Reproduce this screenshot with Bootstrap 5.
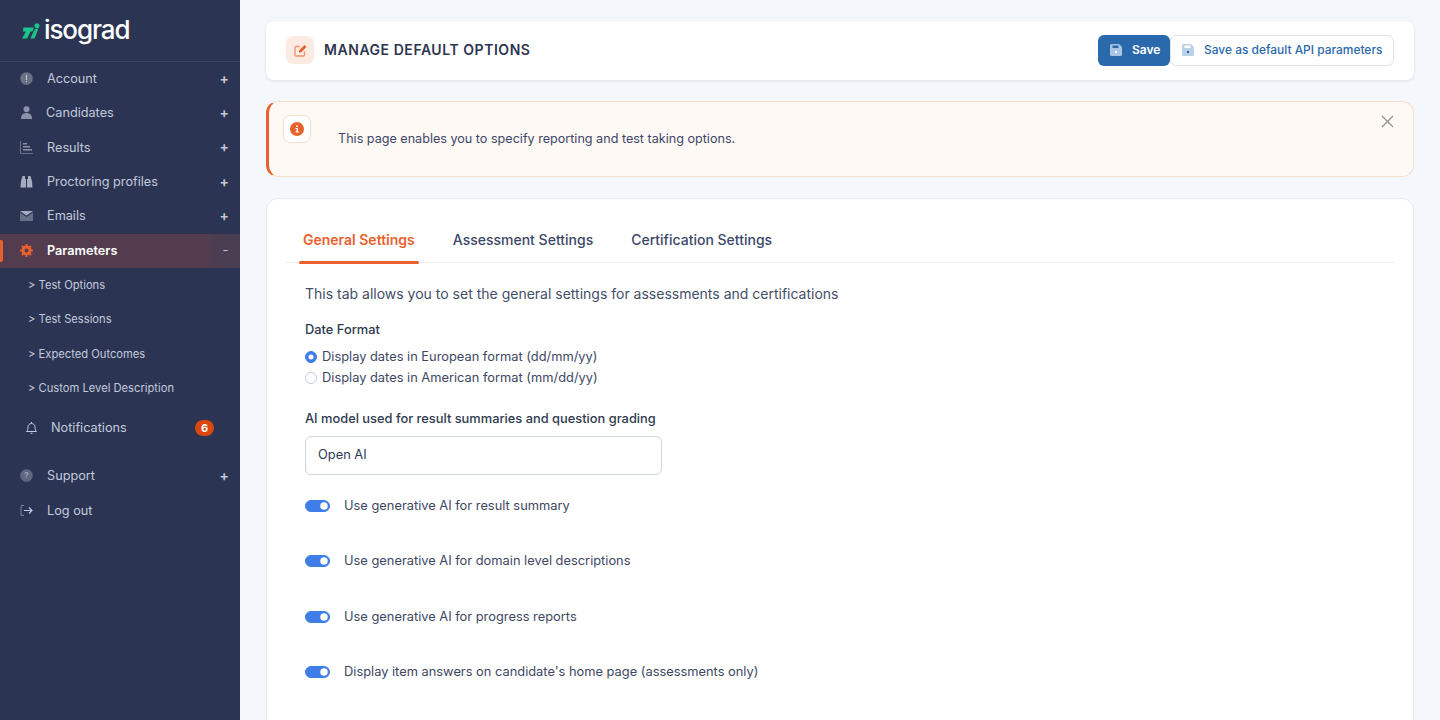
<!DOCTYPE html>
<html lang="en">
<head>
<meta charset="UTF-8">
<meta name="viewport" content="width=device-width, initial-scale=1.0">
<title>Manage default options</title>
<link href="https://cdn.jsdelivr.net/npm/bootstrap@5.3.3/dist/css/bootstrap.min.css" rel="stylesheet">
<style>
html, body { height: 720px; overflow: hidden; }
body { font-family: Inter, "Liberation Sans", sans-serif; background: #f4f7fb; color: #2f3a55; font-size: 13px; }
.app-shell { height: 720px; overflow: hidden; }

/* sidebar */
.side-bar { width: 240px; flex: 0 0 240px; background: #2b3553; height: 720px; }
.brand-row { height: 62px; padding: 16px 0 0 22px; border-bottom: 1px solid #3b4563; gap: 4px; }
.brand-name { font-size: 26px; line-height: 28px; font-weight: 500; color: #fff; letter-spacing: -1.1px; }
.side-menu { margin-top: -.4px; }
.side-row { height: 34.4px; color: #c3c9dc; font-size: 12.7px; padding: 0 0 .9px 20px; position: relative; }
.side-row svg { flex: 0 0 13px; }
.side-label { margin-left: 14px; }
.side-sign { position: absolute; right: 11px; top: 9px; font-size: 14px; line-height: 16px; font-weight: 600; color: #c3c9dc; }
.side-row.is-open { background: #523c4d; color: #fff; font-weight: 600; }
.side-row.is-open::before { content: ""; position: absolute; left: 0; top: 6px; width: 3px; height: 22px; background: #e8612c; border-radius: 0 2px 2px 0; }
.open-toggle { position: absolute; right: 0; top: 0; width: 29px; height: 100%; background: #4b3d52; color: #c3c9dc; text-align: center; line-height: 33px; font-size: 13px; font-weight: 400; }
.side-sub { height: 34.4px; padding-left: 28px; font-size: 11.2px; color: #c3c9dc; }
.notif-row { margin-top: 5.4px; height: 34px; padding-left: 25px; color: #c3c9dc; font-size: 12.7px; }
.notif-row .side-label { margin-left: 13px; }
.notif-count { margin-left: auto; margin-right: 26px; width: 19px; height: 16px; border-radius: 8px; background: #d9480f; color: #fff; font-size: 11px; font-weight: 700; line-height: 16px; text-align: center; }
.side-gap { height: 14px; }

/* main */
.main-area { padding: 21px 26px 0; min-width: 0; }
.head-card { height: 59px; background: #fff; border-radius: 8px; box-shadow: 0 1px 3px rgba(40,50,80,.12); padding: 0 20px 1px; }
.head-icon { width: 28px; height: 28px; border-radius: 7px; background: #fcebe3; }
.head-title { font-size: 14px; font-weight: 600; letter-spacing: .55px; color: #2d3650; margin: 0 0 0 10px; }
.save-main { width: 72px; height: 31px; padding: 0 0 0 12px; background: #2b69ad; border: 0; border-radius: 6px; color: #fff; font-size: 12px; font-weight: 600; gap: 10px; }
.save-alt { width: 224px; height: 31px; padding: 0 0 0 11px; background: #fff; border: 1px solid #dfe2ee; border-radius: 6px; color: #2b69ad; font-size: 11.95px; font-weight: 500; gap: 10px; }
.info-box { margin-top: 21px; height: 76px; border: 1px solid #f6dfcb; border-left: 3px solid #e8612c; border-radius: 12px; background: #fff9f5; position: relative; font-size: 12.6px; color: #3d4769; padding: 0; }
.info-icon { position: absolute; left: 14px; top: 13px; width: 28px; height: 28px; border-radius: 7px; background: #fff; border: 1px solid #f6dfcb; }
.info-text { position: absolute; left: 69px; top: 28px; }
.info-close { position: absolute; right: 19px; top: 13px; }
.set-card { margin-top: 21px; background: #fff; border: 1px solid #e6e9f1; border-radius: 12px; padding: 19px 18px 0; height: 560px; }
.tab-strip { border-bottom: 1px solid #eceef3; padding-left: 14px; height: 45px; gap: 30px; }
.tab-link { font-size: 14px; font-weight: 500; color: #3d4769; padding: 0 4px; height: 45px; line-height: 44px; }
.tab-link.is-current { color: #e8612c; font-weight: 600; position: relative; }
.tab-link.is-current::after { content: ""; position: absolute; left: 0; right: 0; bottom: -1px; height: 3px; background: #e8612c; border-radius: 2px; }
.tab-intro { font-size: 14px; color: #434e68; margin: 22px 0 0 20px; line-height: 18px; }
.opt-block { margin-left: 20px; }
.opt-title { font-size: 12.85px; font-weight: 500; color: #2f3a4f; line-height: 16px; margin: 0; }
.radio-line { height: 21px; margin: 0; padding: 0; min-height: 0; gap: 5px; font-size: 12.85px; color: #3d4763; }
.radio-line .form-check-input { width: 12px; height: 12px; margin: 0; float: none; border-color: #c5cbdc; }
.radio-line .form-check-input:checked { background-color: #3f7de8; border-color: #3f7de8; }
.model-select { width: 357px; height: 39px; border: 1px solid #ced4e2; border-radius: 6px; background: #fff; font-size: 12.85px; color: #2f3a55; padding: 0 12px; margin-top: 9px; line-height: 35px; }
.switch-line { height: 55.4px; margin: 0; padding: 0; gap: 14px; font-size: 12.85px; color: #3d4763; align-items: flex-start; }
.switch-line .form-check-input { width: 25px; height: 12px; margin: 3px 0 0; float: none; background-color: #3f7de8; border-color: #3f7de8; }
.switch-text { line-height: 18px; }
</style>
</head>
<body>
<div class="app-shell d-flex">
  <aside class="side-bar d-flex flex-column">
    <div class="brand-row d-flex align-items-start">
      <svg width="18" height="17" viewBox="0 0 18 17" style="margin-top:7px"><path d="M1.500 4.500H12L10.500 8.500H8.500L5 15.500H0L4 8.500H.8Z" fill="#1bc48c"/><path d="M12.800 6.200L16.500 5.500L12.500 15.500H8.300Z" fill="#1bc48c"/><circle cx="15" cy="2.700" r="2.500" fill="#1bc48c"/></svg>
      <span class="brand-name">isograd</span>
    </div>
    <nav class="side-menu">
      <div class="side-row d-flex align-items-center">
        <svg width="13" height="13" viewBox="0 0 13 13"><circle cx="6.5" cy="6.5" r="6.3" fill="#6a7288"/><path d="M6 3h1v5H6z M6 9h1v1H6z" fill="#c3c9dc"/></svg>
        <span class="side-label">Account</span><span class="side-sign">+</span>
      </div>
      <div class="side-row d-flex align-items-center">
        <svg width="13" height="13" viewBox="0 0 13 13"><circle cx="6.5" cy="3.2" r="3" fill="#8b92a8"/><path d="M1 13c0-4 2-6 5.500-6s5.500 2 5.500 6z" fill="#8b92a8"/></svg>
        <span class="side-label" style="margin-left:13px">Candidates</span><span class="side-sign">+</span>
      </div>
      <div class="side-row d-flex align-items-center">
        <svg width="13" height="13" viewBox="0 0 13 13"><path d="M.5 0v12.500H13" fill="none" stroke="#6a7288"/><path d="M3 2h4v1.500H3zM3 5h7v1.500H3zM3 8h9v1.500H3z" fill="#8b92a8"/></svg>
        <span class="side-label">Results</span><span class="side-sign">+</span>
      </div>
      <div class="side-row d-flex align-items-center">
        <svg width="13" height="13" viewBox="0 0 13 13"><path d="M2.500 1h2.500v3H6v8.500H0.500L1 6zM8 1h2.500L12 6l.5 6.500H7V4h1z" fill="#a5acc2"/></svg>
        <span class="side-label">Proctoring profiles</span><span class="side-sign">+</span>
      </div>
      <div class="side-row d-flex align-items-center">
        <svg width="13" height="10" viewBox="0 0 13 10"><path d="M0 0h13L6.500 4.500z" fill="#a5acc2"/><path d="M0 1.500l6.500 4.500L13 1.500V10H0z" fill="#667088"/></svg>
        <span class="side-label">Emails</span><span class="side-sign">+</span>
      </div>
      <div class="side-row is-open d-flex align-items-center">
        <svg width="13" height="13" viewBox="0 0 13 13"><circle cx="6.500" cy="6.500" r="3.500" fill="none" stroke="#e8612c" stroke-width="3"/><path d="M6.500 0v13M0 6.500h13M2 2l9 9M11 2l-9 9" stroke="#e8612c" stroke-width="2" stroke-dasharray="2.300 8.300 2.300"/></svg>
        <span class="side-label">Parameters</span><span class="open-toggle">-</span>
      </div>
      <div class="side-sub d-flex align-items-center">&gt; Test Options</div>
      <div class="side-sub d-flex align-items-center">&gt; Test Sessions</div>
      <div class="side-sub d-flex align-items-center">&gt; Expected Outcomes</div>
      <div class="side-sub d-flex align-items-center">&gt; Custom Level Description</div>
      <div class="notif-row d-flex align-items-center">
        <svg width="13" height="13" viewBox="0 0 13 13" fill="none" stroke="#c3c9dc"><path d="M1.500 10.500h10c-1-1-1.500-2-1.500-4.500 0-2-1.500-3.500-3.500-3.500S3 4 3 6c0 2.500-.5 3.500-1.500 4.500z"/><path d="M5.500 12.300h2M6.500 1v1.500"/></svg>
        <span class="side-label">Notifications</span><span class="notif-count">6</span>
      </div>
      <div class="side-gap"></div>
      <div class="side-row d-flex align-items-center">
        <svg width="13" height="13" viewBox="0 0 13 13"><circle cx="6.500" cy="6.500" r="6.300" fill="#5f6880"/><text x="6.500" y="9.300" text-anchor="middle" font-size="8" font-weight="700" fill="#9aa1b6" font-family="Inter">?</text></svg>
        <span class="side-label">Support</span><span class="side-sign">+</span>
      </div>
      <div class="side-row d-flex align-items-center">
        <svg width="13" height="11" viewBox="0 0 13 11" fill="none"><path d="M4 .5H1v10h3" stroke="#7a8197"/><path d="M4 5.500h8M9 2.500l3 3-3 3" stroke="#c3c9dc" stroke-width="1.200"/></svg>
        <span class="side-label">Log out</span>
      </div>
    </nav>
  </aside>

  <main class="main-area flex-grow-1">
    <div class="head-card d-flex align-items-center">
      <span class="head-icon d-flex align-items-center justify-content-center">
        <svg width="13" height="13" viewBox="0 0 13 13" fill="none"><path d="M5.500 2.500H2a1 1 0 0 0-1 1V11a1 1 0 0 0 1 1h7.500a1 1 0 0 0 1-1V7.500" stroke="#f2906a" stroke-width="1.300"/><path d="M5 6.500L10.500 1 12.500 3 7 8.500H5z" fill="#e8612c"/></svg>
      </span>
      <h1 class="head-title">MANAGE DEFAULT OPTIONS</h1>
      <div class="ms-auto d-flex">
        <button class="save-main d-flex align-items-center" type="button">
          <svg width="12" height="12" viewBox="0 0 12 12"><path d="M1.500 0H9l3 3v7.500A1.500 1.500 0 0 1 10.500 12h-9A1.500 1.500 0 0 1 0 10.500v-9A1.500 1.500 0 0 1 1.500 0z" fill="#a9c4e4"/><path d="M2.500 1.500h6v2.500h-6z" fill="#2b69ad"/><circle cx="6" cy="8" r="1.200" fill="#fff"/></svg>
          Save
        </button>
        <button class="save-alt d-flex align-items-center" type="button">
          <svg width="12" height="12" viewBox="0 0 12 12"><path d="M1.500 0H9l3 3v7.500A1.500 1.500 0 0 1 10.500 12h-9A1.500 1.500 0 0 1 0 10.500v-9A1.500 1.500 0 0 1 1.500 0z" fill="#bcd0e8"/><path d="M2.500 1.500h6v2.500h-6z" fill="#fff"/><circle cx="6" cy="8" r="1.200" fill="#2b69ad"/></svg>
          Save as default API parameters
        </button>
      </div>
    </div>

    <div class="info-box">
      <span class="info-icon d-flex align-items-center justify-content-center">
        <svg width="14" height="14" viewBox="0 0 14 14"><circle cx="7" cy="7" r="7" fill="#e8612c"/><path d="M6 3.500h2v1.500H6zM5.500 6h2.500v3.500h1v1H5.500v-1h1V7h-1z" fill="#fff"/></svg>
      </span>
      <span class="info-text">This page enables you to specify reporting and test taking options.</span>
      <svg class="info-close" width="13" height="13" viewBox="0 0 13 13"><path d="M1 1l11 11M12 1L1 12" stroke="#8f8f8f" stroke-width="1.200"/></svg>
    </div>

    <section class="set-card">
      <div class="tab-strip d-flex">
        <span class="tab-link is-current">General Settings</span>
        <span class="tab-link">Assessment Settings</span>
        <span class="tab-link">Certification Settings</span>
      </div>
      <p class="tab-intro">This tab allows you to set the general settings for assessments and certifications</p>
      <div class="opt-block">
        <p class="opt-title" style="margin-top:19px">Date Format</p>
        <div style="margin-top:8px">
          <label class="form-check radio-line d-flex align-items-center"><input class="form-check-input" type="radio" name="dateFormat" checked> Display dates in European format (dd/mm/yy)</label>
          <label class="form-check radio-line d-flex align-items-center"><input class="form-check-input" type="radio" name="dateFormat"> Display dates in American format (mm/dd/yy)</label>
        </div>
        <p class="opt-title" style="margin-top:23px">AI model used for result summaries and question grading</p>
        <div class="model-select">Open AI</div>
        <div style="margin-top:22px">
          <label class="form-check form-switch switch-line d-flex"><input class="form-check-input" type="checkbox" checked><span class="switch-text">Use generative AI for result summary</span></label>
          <label class="form-check form-switch switch-line d-flex"><input class="form-check-input" type="checkbox" checked><span class="switch-text">Use generative AI for domain level descriptions</span></label>
          <label class="form-check form-switch switch-line d-flex"><input class="form-check-input" type="checkbox" checked><span class="switch-text">Use generative AI for progress reports</span></label>
          <label class="form-check form-switch switch-line d-flex"><input class="form-check-input" type="checkbox" checked><span class="switch-text">Display item answers on candidate's home page (assessments only)</span></label>
        </div>
      </div>
    </section>
  </main>
</div>
<script src="https://cdn.jsdelivr.net/npm/bootstrap@5.3.3/dist/js/bootstrap.bundle.min.js"></script>
</body>
</html>
